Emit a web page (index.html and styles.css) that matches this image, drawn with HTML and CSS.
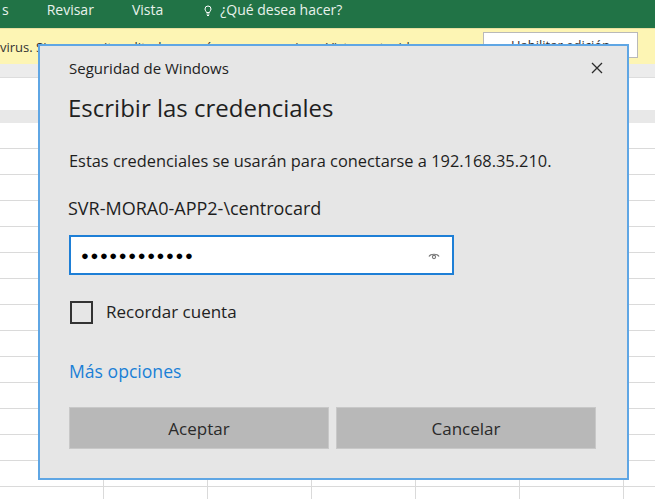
FILE: index.html
```html
<!DOCTYPE html>
<html lang="es">
<head>
  <meta charset="UTF-8">
  <title>Seguridad de Windows</title>
  <link rel="stylesheet" href="styles.css">
</head>
<body>
  <div class="excel">
    <!-- cinta verde -->
    <div class="ribbon">
      <span class="tab">s</span>
      <span class="tab">Revisar</span>
      <span class="tab">Vista</span>
      <span class="tab tell">
        <svg class="bulb" width="10" height="12" viewBox="0 0 10 12"><path d="M2 5a3 3 0 1 1 6 0c0 1.5-1.2 2.2-1.5 3.5h-3C3.2 7.2 2 6.5 2 5zM3.5 10h3M4 11.5h2" fill="none" stroke="#fff" stroke-width="1"/></svg>
        ¿Qué desea hacer?
      </span>
    </div>

    <!-- barra de vista protegida -->
    <div class="msgbar">
      <span class="msg">virus. Si no necesita editarlo, es más seguro seguir en Vista protegida.</span>
      <span class="msg-btn">Habilitar edición</span>
    </div>

    <div class="formula"></div>
    <div class="headers"></div>
    <div class="grid"></div>
  </div>

  <!-- Dialogo de credenciales -->
  <div class="dialog">
    <div class="dialog-title">
      <span>Seguridad de Windows</span>
      <svg class="close" width="12" height="12" viewBox="0 0 12 12"><path d="M1 1l10 10M11 1L1 11" stroke="#2b2b2b" stroke-width="1.3"/></svg>
    </div>
    <h1>Escribir las credenciales</h1>
    <p class="info">Estas credenciales se usarán para conectarse a 192.168.35.210.</p>
    <p class="user">SVR-MORA0-APP2-\centrocard</p>

    <div class="pwd">
      <span class="dots">●●●●●●●●●●●●</span>
      <svg class="eye" width="12" height="9" viewBox="0 0 12 9"><path d="M1 5.5C2.5 2.5 9.5 2.5 11 5.5" fill="none" stroke="#777" stroke-width="1.2"/><circle cx="6" cy="6" r="1.6" fill="none" stroke="#777" stroke-width="1.1"/></svg>
    </div>

    <label class="remember"><span class="box"></span>Recordar cuenta</label>

    <a class="more">Más opciones</a>

    <div class="buttons">
      <button>Aceptar</button>
      <button>Cancelar</button>
    </div>
  </div>
</body>
</html>
```

FILE: styles.css
```css
* {
  box-sizing: border-box;
}

body {
  margin: 0;
  width: 655px;
  height: 499px;
  overflow: hidden;
  position: relative;
  font-family: 'Open Sans', 'Noto Sans', sans-serif;
  background: #ffffff;
}

/* fondo de Excel */
.ribbon {
  height: 28px;
  background: #217346;
  color: #e8f2ec;
  font-size: 14px;
  display: flex;
  align-items: flex-start;
}

.tab {
  line-height: 20px;
  margin-left: 38px;
}

.tab:first-child {
  margin-left: 2px;
}

.tell {
  margin-left: 40px;
  display: flex;
  align-items: center;
  gap: 7px;
}

.msgbar {
  height: 36px;
  background: #fdf5b4;
  border-top: 1px solid #e9dfa0;
  display: flex;
  align-items: center;
  font-size: 13px;
  color: #333;
  white-space: nowrap;
}

.msg {
  margin-left: 0;
  width: 483px;
}

.msg-btn {
  width: 155px;
  height: 26px;
  margin-top: -4px;
  background: #fff;
  border: 1px solid #b9b9b9;
  text-align: center;
  line-height: 24px;
}

.formula {
  height: 14px;
  background: #ececec;
  border-bottom: 1px solid #dddddd;
}

.headers {
  background: #fff;
  border-bottom: 13px solid #e8e8e8;
  height: 45px;
}

.grid {
  height: 400px;
  background-color: #fff;
  background-image:
    repeating-linear-gradient(to bottom, transparent 0, transparent 25px, #dadada 25px, #dadada 26px),
    repeating-linear-gradient(to right, transparent 0, transparent 103px, #dadada 103px, #dadada 104px);
}

/* dialogo */
.dialog {
  position: absolute;
  left: 38px;
  top: 44px;
  width: 591px;
  height: 436px;
  background: #e6e6e6;
  border: 2px solid #5fa6e4;
  padding: 14px 30px 0 29px;
  color: #1e1e1e;
}

.dialog-title {
  display: flex;
  justify-content: space-between;
  align-items: center;
  font-size: 15px;
  line-height: 16px;
  color: #222;
}

.close {
  margin-right: -6px;
}

h1 {
  font-size: 24px;
  font-weight: normal;
  line-height: 26px;
  margin: 19px 0 0 -1px;
  color: #1f1f1f;
}

.info {
  font-size: 16.4px;
  line-height: 18px;
  margin: 31px 0 0;
}

.user {
  font-size: 18px;
  line-height: 18px;
  margin: 29px 0 0 -1px;
}

.pwd {
  margin-top: 18px;
  width: 385px;
  height: 40px;
  background: #fff;
  border: 2px solid #1e7fd6;
  display: flex;
  align-items: center;
  justify-content: space-between;
  padding: 0 12px 0 10px;
}

.dots {
  font-size: 13px;
  letter-spacing: 1.6px;
  color: #000;
}

.remember {
  margin-top: 25px;
  display: flex;
  align-items: center;
  font-size: 17px;
  line-height: 24px;
  color: #222;
}

.box {
  width: 23px;
  height: 23px;
  border: 2px solid #333;
  margin: 0 13px 0 1px;
}

.more {
  display: block;
  margin-top: 38px;
  font-size: 17.6px;
  line-height: 18px;
  color: #1a80d6;
}

.buttons {
  margin-top: 27px;
  display: flex;
  gap: 7px;
}

button {
  width: 260px;
  height: 42px;
  background: #b8b8b8;
  border: 1px solid #c8c8c8;
  font-family: inherit;
  font-size: 17px;
  color: #2a2a2a;
}
```
